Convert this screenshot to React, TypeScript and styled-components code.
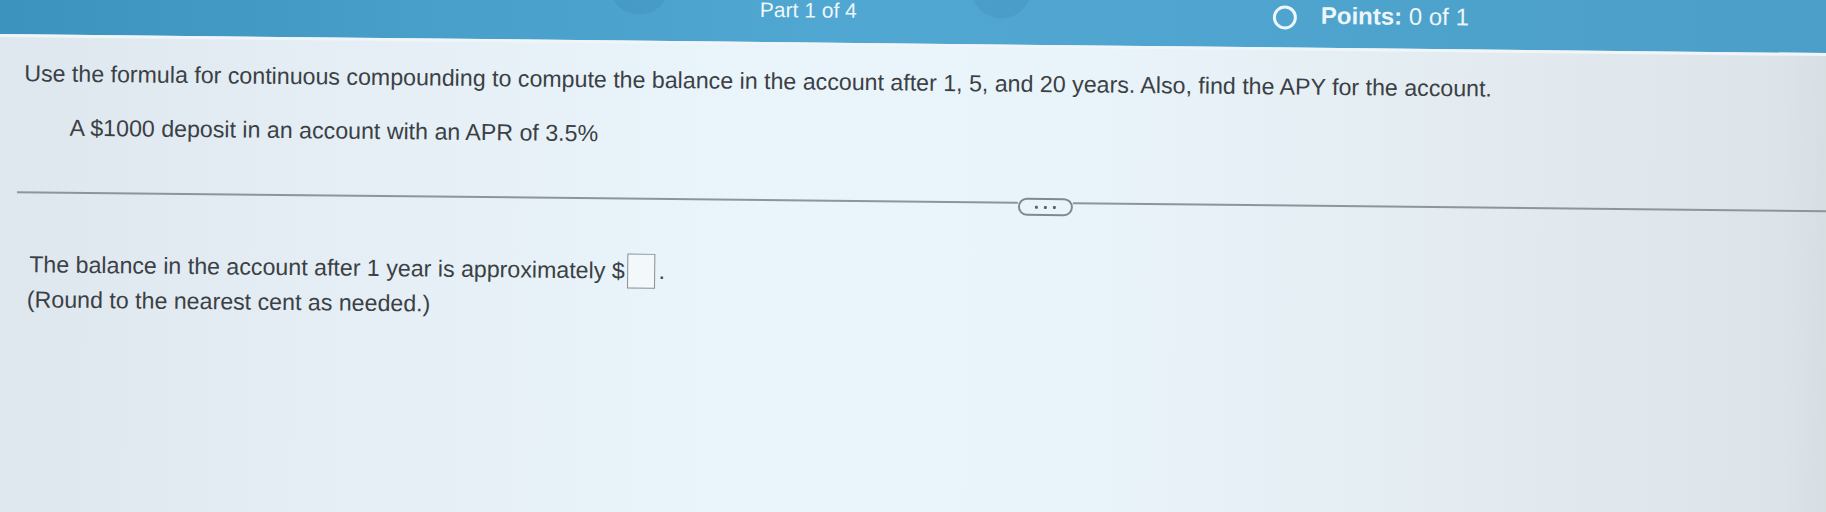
import React from "react";
import styled, { createGlobalStyle } from "styled-components";

const Global = createGlobalStyle`
  html, body {
    margin: 0;
    padding: 0;
    height: 512px;
    overflow: hidden;
  }
  body {
    background:
      linear-gradient(180deg, #4b9fca 0px, #4b9fca 22px, transparent 22px),
      linear-gradient(90deg, #dfe7ee 0%, #e4eef4 18%, #eaf5fb 40%, #e9f4fa 58%, #e3ebf0 80%, #dde4e9 96%, #d3dade 100%);
    font-family: "Liberation Sans", Arial, sans-serif;
  }
`;

const Page = styled.div`
  width: 1860px;
  min-height: 600px;
  margin-top: -40px;
  transform: rotate(0.6deg);
  transform-origin: 0 40px;
  background: linear-gradient(90deg, #dfe7ee 0%, #e4eef4 18%, #eaf5fb 40%, #e9f4fa 58%, #e3ebf0 80%, #dde4e9 96%, #d3dade 100%);
  color: #3b4045;
`;

const Header = styled.header`
  box-sizing: border-box;
  height: 77px;
  padding-top: 40px;
  overflow: hidden;
  display: flex;
  align-items: flex-start;
  padding-left: 609px;
  background: linear-gradient(90deg, #3c93bd 0%, #48a0cb 25%, #50a7d1 45%, #4fa5cf 65%, #4b9ec8 100%);
  border-bottom: 3px solid #eff5f9;
  color: #eef6fa;
`;

const NavCircle = styled.div<{ $gap: number }>`
  flex: none;
  width: 60px;
  height: 60px;
  margin-top: -52px;
  margin-left: ${(p) => p.$gap}px;
  border-radius: 50%;
  background: rgba(30, 100, 145, 0.12);
`;

const PartLabel = styled.div`
  flex: none;
  margin-left: 91px;
  margin-top: -9px;
  font-size: 21px;
  line-height: 1;
  white-space: nowrap;
`;

const PointsCircle = styled.div`
  flex: none;
  box-sizing: border-box;
  width: 24px;
  height: 24px;
  margin-left: 242px;
  margin-top: -8px;
  border: 3px solid #eef7fb;
  border-radius: 50%;
`;

const PointsLabel = styled.div`
  flex: none;
  margin-left: 24px;
  margin-top: -10px;
  font-size: 24px;
  line-height: 1;
  white-space: nowrap;
  b {
    font-weight: 700;
  }
`;

const Text = styled.div<{ $indent: number; $top: number }>`
  padding-left: ${(p) => p.$indent}px;
  margin-top: ${(p) => p.$top}px;
  font-size: 23.2px;
  line-height: 26px;
  white-space: nowrap;
`;

const Divider = styled.div`
  display: flex;
  align-items: flex-start;
  height: 18px;
  margin-top: 47px;
  margin-left: 19px;
`;

const Rule = styled.div<{ $width?: number }>`
  ${(p) => (p.$width ? `width: ${p.$width}px; flex: none;` : "flex: 1;")}
  height: 2px;
  margin-top: 4px;
  background: #8b959b;
`;

const Pill = styled.div`
  flex: none;
  box-sizing: border-box;
  width: 55px;
  height: 18px;
  border: 2px solid #7f898f;
  border-radius: 9px;
  display: flex;
  align-items: center;
  justify-content: center;
  gap: 6px;
`;

const Dot = styled.span`
  width: 3px;
  height: 3px;
  background: #5b6469;
  border-radius: 1px;
`;

const AnswerBox = styled.span`
  display: inline-block;
  box-sizing: border-box;
  width: 28px;
  height: 35px;
  margin-left: 3px;
  vertical-align: -10px;
  border: 1.5px solid #858d92;
  background: #f3f8fb;
`;

const Period = styled.span`
  margin-left: 3px;
`;

export default function App() {
  return (
    <>
      <Global />
      <Page>
        <Header>
          <NavCircle $gap={0} />
          <PartLabel>Part 1 of 4</PartLabel>
          <NavCircle $gap={114} />
          <PointsCircle />
          <PointsLabel>
            <b>Points:</b> 0 of 1
          </PointsLabel>
        </Header>
        <Text $indent={25} $top={23}>
          Use the formula for continuous compounding to compute the balance in the account after 1, 5, and 20 years. Also, find the APY for the account.
        </Text>
        <Text $indent={71} $top={28}>
          A $1000 deposit in an account with an APR of 3.5%
        </Text>
        <Divider>
          <Rule $width={1001} />
          <Pill>
            <Dot />
            <Dot />
            <Dot />
          </Pill>
          <Rule />
        </Divider>
        <Text $indent={32} $top={42}>
          The balance in the account after 1 year is approximately $
          <AnswerBox />
          <Period>.</Period>
        </Text>
        <Text $indent={30} $top={4}>
          (Round to the nearest cent as needed.)
        </Text>
      </Page>
    </>
  );
}
